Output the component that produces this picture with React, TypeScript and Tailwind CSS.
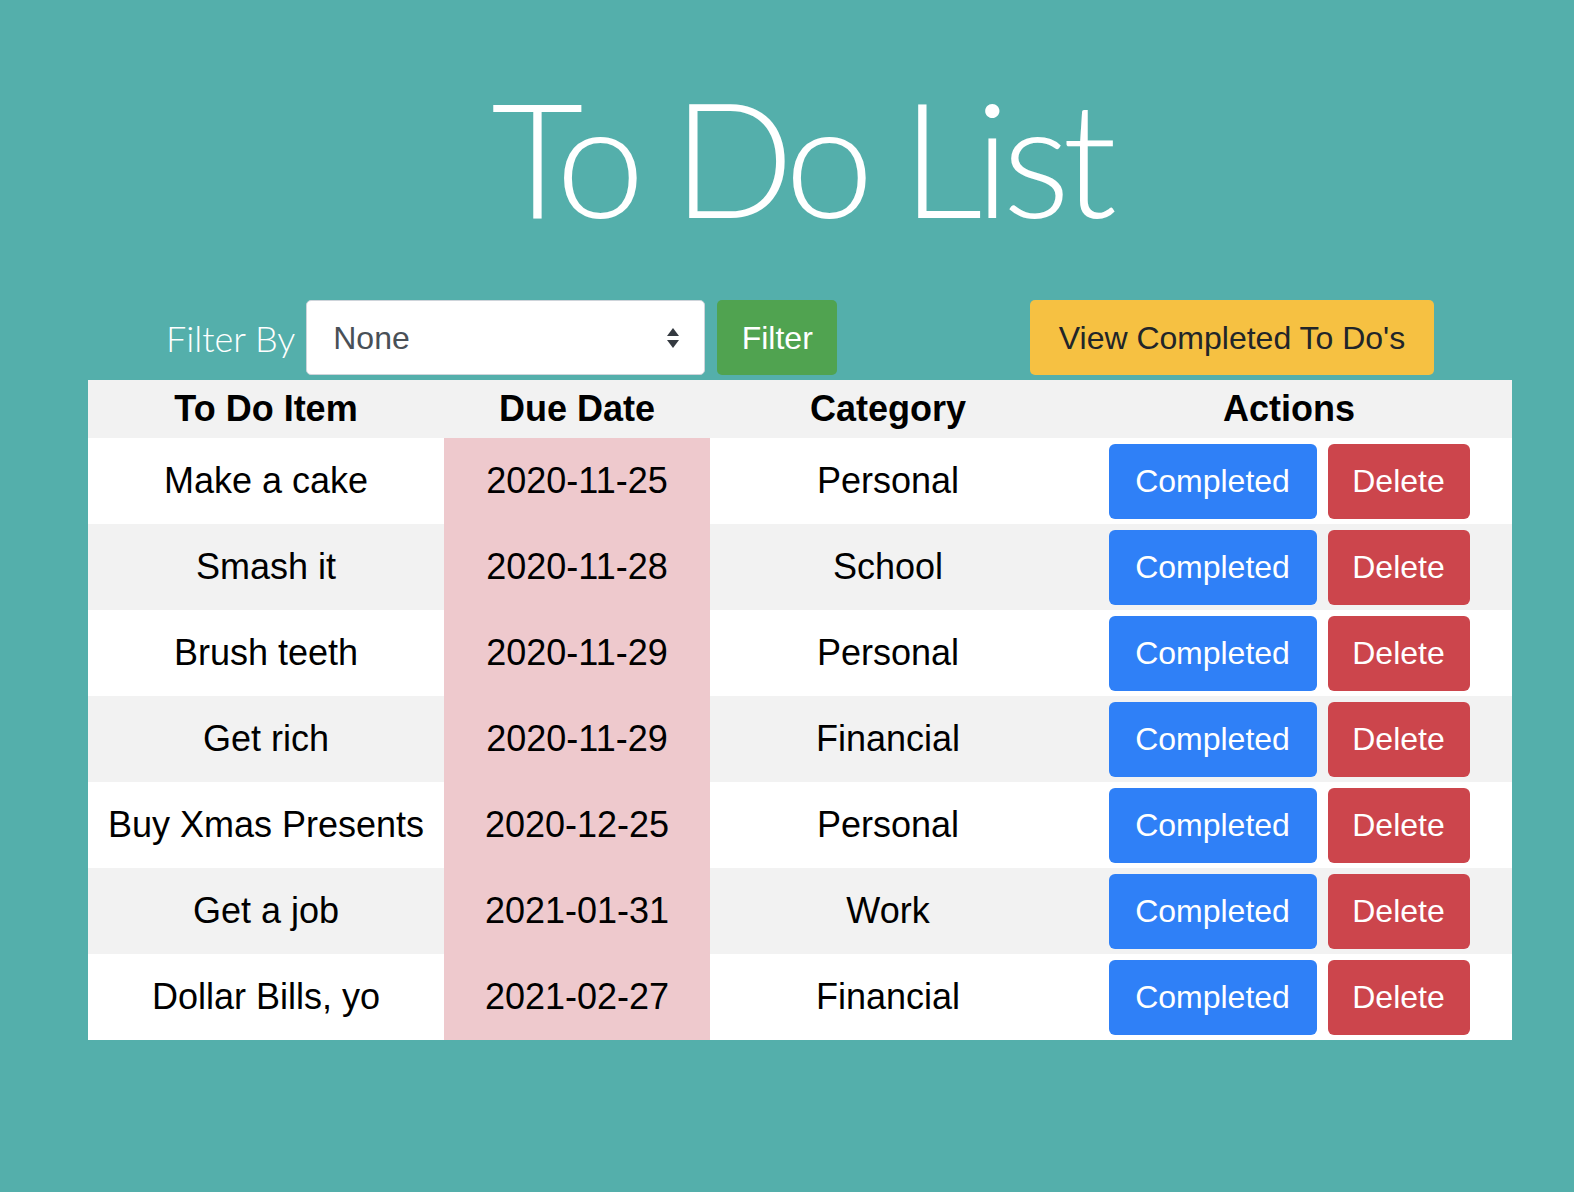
import React from 'react';

type Todo = { item: string; due: string; category: string };

const todos: Todo[] = [
  { item: 'Make a cake', due: '2020-11-25', category: 'Personal' },
  { item: 'Smash it', due: '2020-11-28', category: 'School' },
  { item: 'Brush teeth', due: '2020-11-29', category: 'Personal' },
  { item: 'Get rich', due: '2020-11-29', category: 'Financial' },
  { item: 'Buy Xmas Presents', due: '2020-12-25', category: 'Personal' },
  { item: 'Get a job', due: '2021-01-31', category: 'Work' },
  { item: 'Dollar Bills, yo', due: '2021-02-27', category: 'Financial' },
];

const SelectArrows: React.FC = () => (
  <svg width="14" height="22" viewBox="0 0 14 22" className="shrink-0">
    <path d="M7 1 L13 9 L1 9 Z" fill="#343a40" />
    <path d="M1 13 L13 13 L7 21 Z" fill="#343a40" />
  </svg>
);

const App: React.FC = () => {
  return (
    <div className="min-h-[1192px] w-full bg-[#54afab] font-['Liberation_Sans',Arial,sans-serif]">
      <div className="ml-[88px] w-[1424px] pt-[76px]">
        {/* Title */}
        <h1 className="text-center font-['Lato',sans-serif] font-light text-[160px] leading-[160px] tracking-[-8px] text-white">
          To Do List
        </h1>

        {/* Filter bar */}
        <div className="mt-[64px] flex items-center justify-between px-[78px]">
          <div className="flex items-center">
            <span className="font-['Lato',sans-serif] font-light text-[36px] text-white">Filter By</span>
            <div className="ml-[11px] flex h-[75px] w-[399px] items-center justify-between rounded-[5px] border border-[#ced4da] bg-white pl-[26px] pr-[24px] text-[32px] text-[#495057]">
              <span>None</span>
              <SelectArrows />
            </div>
            <button className="ml-[12px] h-[75px] w-[120px] rounded-[5px] bg-[#50a350] text-[32px] text-white">
              Filter
            </button>
          </div>
          <button className="h-[75px] w-[404px] rounded-[5px] bg-[#f6c142] text-[32px] text-[#212529]">
            View Completed To Do's
          </button>
        </div>

        {/* Table */}
        <div className="mt-[5px] w-full">
          <div className="grid h-[58px] grid-cols-[356px_266px_356px_446px] items-center bg-[#f2f2f2] text-center text-[36px] font-bold text-black">
            <div>To Do Item</div>
            <div>Due Date</div>
            <div>Category</div>
            <div>Actions</div>
          </div>
          {todos.map((t, i) => (
            <div
              key={t.item}
              className={`grid h-[86px] grid-cols-[356px_266px_356px_446px] items-stretch text-center text-[36px] text-black ${
                i % 2 === 0 ? 'bg-white' : 'bg-[#f2f2f2]'
              }`}
            >
              <div className="flex items-center justify-center whitespace-nowrap">{t.item}</div>
              <div className="flex items-center justify-center bg-[#eec9cd]">{t.due}</div>
              <div className="flex items-center justify-center">{t.category}</div>
              <div className="flex items-center justify-center gap-[11px]">
                <button className="h-[75px] w-[208px] rounded-[6px] bg-[#2f80f7] text-[32px] text-white">
                  Completed
                </button>
                <button className="h-[75px] w-[142px] rounded-[6px] bg-[#cc454c] text-[32px] text-white">
                  Delete
                </button>
              </div>
            </div>
          ))}
        </div>
      </div>
    </div>
  );
};

export default App;
